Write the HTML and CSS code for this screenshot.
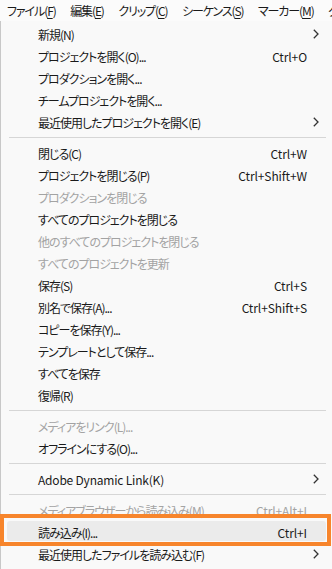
FILE: index.html
```html
<!DOCTYPE html>
<html lang="ja">
<head>
<meta charset="utf-8">
<link rel="stylesheet" href="styles.css">
</head>
<body>
<div class="menubar">
  <span class="mb-item">ファイル(<u>F</u>)</span>
  <span class="mb-item">編集(<u>E</u>)</span>
  <span class="mb-item">クリップ(<u>C</u>)</span>
  <span class="mb-item">シーケンス(<u>S</u>)</span>
  <span class="mb-item">マーカー(<u>M</u>)</span>
  <span class="mb-item">グ</span>
</div>
<div class="panel">
  <div class="row"><span class="label">新規(N)</span><span class="key"></span><span class="arrow"><svg width="6" height="10" viewBox="0 0 6 10"><polyline points="0.8,0.8 5,5 0.8,9.2" fill="none" stroke="#333" stroke-width="1.3"/></svg></span></div>
  <div class="row"><span class="label">プロジェクトを開く(O)...</span><span class="key">Ctrl+O</span><span class="arrow"></span></div>
  <div class="row"><span class="label">プロダクションを開く...</span><span class="key"></span><span class="arrow"></span></div>
  <div class="row"><span class="label">チームプロジェクトを開く...</span><span class="key"></span><span class="arrow"></span></div>
  <div class="row"><span class="label">最近使用したプロジェクトを開く(E)</span><span class="key"></span><span class="arrow"><svg width="6" height="10" viewBox="0 0 6 10"><polyline points="0.8,0.8 5,5 0.8,9.2" fill="none" stroke="#333" stroke-width="1.3"/></svg></span></div>
  <div class="sep"></div>
  <div class="row"><span class="label">閉じる(C)</span><span class="key">Ctrl+W</span><span class="arrow"></span></div>
  <div class="row"><span class="label">プロジェクトを閉じる(P)</span><span class="key">Ctrl+Shift+W</span><span class="arrow"></span></div>
  <div class="row disabled"><span class="label">プロダクションを閉じる</span><span class="key"></span><span class="arrow"></span></div>
  <div class="row"><span class="label">すべてのプロジェクトを閉じる</span><span class="key"></span><span class="arrow"></span></div>
  <div class="row disabled"><span class="label">他のすべてのプロジェクトを閉じる</span><span class="key"></span><span class="arrow"></span></div>
  <div class="row disabled"><span class="label">すべてのプロジェクトを更新</span><span class="key"></span><span class="arrow"></span></div>
  <div class="row"><span class="label">保存(S)</span><span class="key">Ctrl+S</span><span class="arrow"></span></div>
  <div class="row"><span class="label">別名で保存(A)...</span><span class="key">Ctrl+Shift+S</span><span class="arrow"></span></div>
  <div class="row"><span class="label">コピーを保存(Y)...</span><span class="key"></span><span class="arrow"></span></div>
  <div class="row"><span class="label">テンプレートとして保存...</span><span class="key"></span><span class="arrow"></span></div>
  <div class="row"><span class="label">すべてを保存</span><span class="key"></span><span class="arrow"></span></div>
  <div class="row"><span class="label">復帰(R)</span><span class="key"></span><span class="arrow"></span></div>
  <div class="sep"></div>
  <div class="row disabled"><span class="label">メディアをリンク(L)...</span><span class="key"></span><span class="arrow"></span></div>
  <div class="row"><span class="label">オフラインにする(O)...</span><span class="key"></span><span class="arrow"></span></div>
  <div class="sep"></div>
  <div class="row"><span class="label latin">Adobe Dynamic Link(K)</span><span class="key"></span><span class="arrow"><svg width="6" height="10" viewBox="0 0 6 10"><polyline points="0.8,0.8 5,5 0.8,9.2" fill="none" stroke="#333" stroke-width="1.3"/></svg></span></div>
  <div class="sep"></div>
  <div class="row disabled"><span class="label">メディアブラウザーから読み込み(M)</span><span class="key">Ctrl+Alt+I</span><span class="arrow"></span></div>
  <div class="row active"><span class="label">読み込み(I)...</span><span class="key">Ctrl+I</span><span class="arrow"></span></div>
  <div class="row"><span class="label">最近使用したファイルを読み込む(F)</span><span class="key"></span><span class="arrow"><svg width="6" height="10" viewBox="0 0 6 10"><polyline points="0.8,0.8 5,5 0.8,9.2" fill="none" stroke="#333" stroke-width="1.3"/></svg></span></div>
</div>
</body>
</html>
```

FILE: styles.css
```css
* { box-sizing: border-box; }
html, body {
  margin: 0;
  padding: 0;
  width: 332px;
  height: 569px;
  overflow: hidden;
  background: #f9f9f9;
}
body {
  font-family: "Noto Sans CJK JP", "Noto Sans", sans-serif;
  font-feature-settings: "palt";
  font-size: 12px;
  color: #1a1a1a;
}
.menubar {
  height: 21px;
  display: flex;
  align-items: center;
  background: #fbfbfb;
  white-space: nowrap;
  padding-left: 7px;
  gap: 14.5px;
  overflow: hidden;
}
.mb-item { letter-spacing: -1.1px; flex: none; }
.mb-item u { text-underline-offset: 2px; }
.panel {
  border-left: 1px solid #c8c8c8;
  background: #f9f9f9;
  padding-top: 2px;
  height: 548px;
}
.row {
  position: relative;
  height: 22px;
  display: grid;
  grid-template-columns: 1fr auto 25px;
  align-items: center;
  padding-left: 37px;
  white-space: nowrap;
}
.row .label { letter-spacing: -1px; }
.row .label.latin { letter-spacing: -0.2px; }
.row .key { text-align: right; letter-spacing: -0.1px; }
.row .arrow {
  display: flex;
  align-items: center;
  justify-content: flex-start;
  padding-left: 6px;
}
.row .arrow svg { display: block; }
.disabled { color: #a3a3a3; }
.sep {
  height: 1px;
  margin: 4px 6px 4px 8px;
  background: #d6d6d6;
}
.active { z-index: 0; }
.active::before {
  content: "";
  position: absolute;
  left: 6px;
  right: 6px;
  top: 0;
  bottom: 2px;
  background: #ebebeb;
  border-radius: 3px;
  z-index: -1;
}
.active::after {
  content: "";
  position: absolute;
  left: -1px;
  right: 1px;
  top: -7px;
  bottom: -3px;
  border: 4.5px solid #f7852c;
}
```
